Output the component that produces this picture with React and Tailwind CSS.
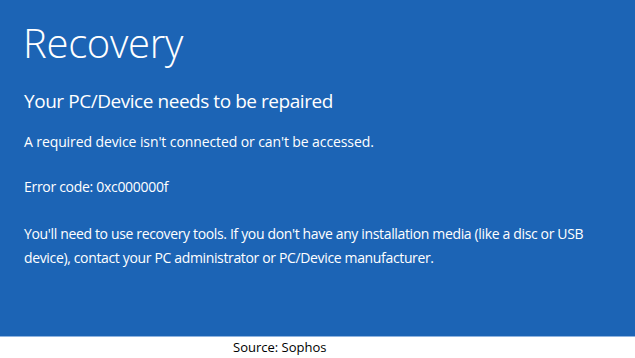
export default function App() {
  return (
    <div className="w-[635px] h-[358px] bg-white overflow-hidden" style={{ fontFamily: '"Open Sans", "Noto Sans", sans-serif' }}>
      <div className="h-[337px] bg-[#1c64b5] text-white pl-[23px] pt-[17px] border-b border-[#8fb4e0]">
        <h1 className="text-[40px] font-light leading-[52px] tracking-[-0.3px]">Recovery</h1>
        <h2 className="mt-[19px] text-[19px] leading-[26px] tracking-[-0.45px] pl-[1px]">Your PC/Device needs to be repaired</h2>
        <p className="mt-[18px] text-[14px] leading-[20px] tracking-[-0.1px] pl-[1px]">A required device isn't connected or can't be accessed.</p>
        <p className="mt-[25px] text-[14px] leading-[20px] tracking-[-0.3px] pl-[1px]">Error code: 0xc000000f</p>
        <p className="mt-[25px] text-[14px] leading-[24px] tracking-[-0.35px] w-[600px] pl-[1px]">You'll need to use recovery tools. If you don't have any installation media (like a disc or USB device), contact your PC administrator or PC/Device manufacturer.</p>
      </div>
      <div className="pl-[233px] text-[13px] leading-[20px] text-black" style={{ fontFamily: '"Open Sans", sans-serif' }}>Source: Sophos</div>
    </div>
  );
}
